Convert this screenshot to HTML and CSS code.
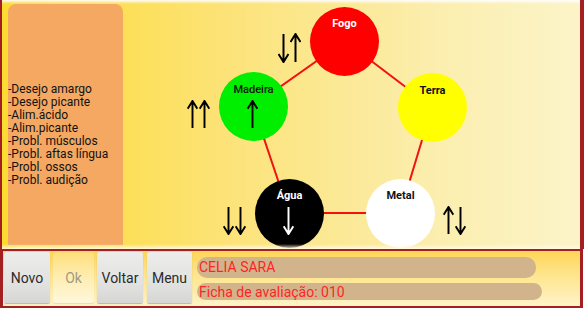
FILE: index.html
```html
<!DOCTYPE html>
<html lang="pt">
<head>
<meta charset="utf-8">
<link rel="stylesheet" href="styles.css">
</head>
<body>
<div class="screen">
  <div class="main">
    <div class="side">
      <div class="side-text">
        <div>-Desejo amargo</div>
        <div>-Desejo picante</div>
        <div>-Alim.ácido</div>
        <div>-Alim.picante</div>
        <div>-Probl. músculos</div>
        <div>-Probl. aftas língua</div>
        <div>-Probl. ossos</div>
        <div>-Probl. audição</div>
      </div>
    </div>
    <div class="diagram">
      <svg class="links" width="458" height="249" viewBox="0 0 458 249">
        <line x1="222" y1="41" x2="130" y2="106"/>
        <line x1="222" y1="41" x2="309" y2="107"/>
        <line x1="130" y1="106" x2="166" y2="213"/>
        <line x1="309" y1="107" x2="277" y2="213"/>
        <line x1="166" y1="213" x2="277" y2="213"/>
      </svg>

      <div class="node node-fogo">Fogo</div>
      <div class="node node-madeira">Madeira</div>
      <div class="node node-terra">Terra</div>
      <div class="node node-agua">Água</div>
      <div class="node node-metal">Metal</div>

      <div class="arrows arrows-fogo">
        <svg class="arrow down" viewBox="0 0 11 30" width="11" height="30"><path d="M5.5 1V29M0.5 21L5.5 29L10.5 21"/></svg>
        <svg class="arrow" viewBox="0 0 11 30" width="11" height="30"><path d="M5.5 29V1M0.5 9L5.5 1L10.5 9"/></svg>
      </div>
      <div class="arrows arrows-madeira-out">
        <svg class="arrow" viewBox="0 0 11 30" width="11" height="29"><path d="M5.5 29V1M0.5 9L5.5 1L10.5 9"/></svg>
        <svg class="arrow" viewBox="0 0 11 30" width="11" height="29"><path d="M5.5 29V1M0.5 9L5.5 1L10.5 9"/></svg>
      </div>
      <div class="arrows arrows-madeira-in">
        <svg class="arrow" viewBox="0 0 11 30" width="11" height="29"><path d="M5.5 29V1M0.5 9L5.5 1L10.5 9"/></svg>
      </div>
      <div class="arrows arrows-agua-in">
        <svg class="arrow white" viewBox="0 0 11 30" width="11" height="29"><path d="M5.5 1V29M0.5 21L5.5 29L10.5 21"/></svg>
      </div>
      <div class="arrows arrows-agua-out">
        <svg class="arrow" viewBox="0 0 11 30" width="11" height="29"><path d="M5.5 1V29M0.5 21L5.5 29L10.5 21"/></svg>
        <svg class="arrow" viewBox="0 0 11 30" width="11" height="29"><path d="M5.5 1V29M0.5 21L5.5 29L10.5 21"/></svg>
      </div>
      <div class="arrows arrows-metal">
        <svg class="arrow" viewBox="0 0 11 30" width="11" height="29"><path d="M5.5 29V1M0.5 9L5.5 1L10.5 9"/></svg>
        <svg class="arrow" viewBox="0 0 11 30" width="11" height="29"><path d="M5.5 1V29M0.5 21L5.5 29L10.5 21"/></svg>
      </div>
    </div>
  </div>

  <div class="bar">
    <div class="buttons">
      <div class="btn btn-novo">Novo</div>
      <div class="btn btn-ok disabled">Ok</div>
      <div class="btn btn-voltar">Voltar</div>
      <div class="btn btn-menu">Menu</div>
    </div>
    <div class="fields">
      <div class="field field-name">CELIA SARA</div>
      <div class="field field-ficha">Ficha de avaliação: 010</div>
    </div>
  </div>
</div>
</body>
</html>
```

FILE: styles.css
```css
html, body {
  margin: 0;
  padding: 0;
  background: #ffffff;
}

body {
  width: 584px;
  height: 310px;
  overflow: hidden;
  font-family: Roboto, "Liberation Sans", sans-serif;
}

.screen {
  display: flex;
  flex-direction: column;
  width: 584px;
  height: 310px;
}

/* ---------- main area ---------- */
.main {
  position: relative;
  display: flex;
  height: 249px;
  box-sizing: border-box;
  border-left: 2px solid #a41f22;
  border-right: 4px solid #a41f22;
  background: linear-gradient(to right, #fcdb32 0%, #fce37a 40%, #fbeeae 75%, #fcf4c9 100%);
  overflow: hidden;
}

.main::before {
  content: "";
  position: absolute;
  left: 0;
  right: 0;
  top: 0;
  height: 4px;
  background: linear-gradient(to bottom, rgba(255, 255, 255, 0.95), rgba(255, 255, 255, 0));
  z-index: 5;
}

.main::after {
  content: "";
  position: absolute;
  left: 0;
  right: 0;
  bottom: 0;
  height: 5px;
  background: linear-gradient(to bottom, rgba(255, 250, 220, 0), rgba(255, 250, 225, 0.95));
  z-index: 5;
}

.side {
  width: 115px;
  margin: 4px 0 4px 6px;
  background: #f4a862;
  border-radius: 8px 8px 0 0;
  box-sizing: border-box;
  padding-top: 79px;
}

.side-text {
  font-size: 12px;
  line-height: 13px;
  color: #111111;
  white-space: nowrap;
}

.diagram {
  position: relative;
  flex: 1;
}

.links {
  position: absolute;
  left: 0;
  top: 0;
}

.links line {
  stroke: #f21010;
  stroke-width: 2;
}

.node {
  position: absolute;
  width: 69px;
  height: 69px;
  border-radius: 50%;
  box-sizing: border-box;
  padding-top: 10px;
  text-align: center;
  font-size: 11px;
  line-height: 13px;
  font-weight: 700;
  color: #111111;
}

.node-fogo {
  left: 187px;
  top: 7px;
  background: #ff0000;
  color: #ffffff;
}

.node-madeira {
  left: 96px;
  top: 72px;
  padding-top: 11px;
  background: #00ee00;
  font-weight: 500;
}

.node-terra {
  left: 275px;
  top: 73px;
  padding-top: 11px;
  background: #ffff00;
}

.node-agua {
  left: 132px;
  top: 179px;
  background: #000000;
  color: #ffffff;
}

.node-metal {
  left: 243px;
  top: 179px;
  background: #ffffff;
}

.arrows {
  position: absolute;
  display: flex;
  gap: 1px;
}

.arrow path {
  fill: none;
  stroke: #000000;
  stroke-width: 2;
}

.arrow.white path {
  stroke: #ffffff;
}

.arrows-fogo {
  left: 155px;
  top: 33px;
}

.arrows-madeira-out {
  left: 64px;
  top: 100px;
}

.arrows-madeira-in {
  left: 124px;
  top: 100px;
}

.arrows-agua-in {
  left: 160px;
  top: 206px;
}

.arrows-agua-out {
  left: 100px;
  top: 206px;
}

.arrows-metal {
  left: 320px;
  top: 206px;
}

/* ---------- bottom bar ---------- */
.bar {
  display: flex;
  width: 583px;
  height: 59px;
  box-sizing: border-box;
  border: 2px solid #a41f22;
  border-left-width: 3px;
  border-right-width: 3px;
  background: linear-gradient(to bottom, #fed657 0%, #fee58e 45%, #fff3c8 100%);
}

.buttons {
  display: flex;
  gap: 3px;
  padding: 1px 0 0 1px;
}

.btn {
  height: 51px;
  box-sizing: border-box;
  display: flex;
  align-items: center;
  justify-content: center;
  font-size: 14px;
  color: #2b2b2b;
  border-radius: 2px;
  background: linear-gradient(to bottom, #ececea 0%, #e2e2e0 60%, #d6d6d4 100%);
  box-shadow: 0 1px 1px rgba(0, 0, 0, 0.25);
}

.btn-novo { width: 46px; }
.btn-ok { width: 41px; }
.btn-voltar { width: 46px; }
.btn-menu { width: 45px; margin-left: 1px; }

.btn.disabled {
  color: #a09a86;
  background: linear-gradient(to bottom, rgba(255, 255, 255, 0.2), rgba(255, 255, 255, 0.4));
  box-shadow: 0 1px 1px rgba(120, 100, 40, 0.15);
}

.fields {
  display: flex;
  flex-direction: column;
  gap: 5px;
  margin-left: 5px;
  padding-top: 6px;
}

.field {
  background: #d2b48c;
  color: #ff2424;
  font-size: 14px;
  box-sizing: border-box;
  padding-left: 2px;
  white-space: nowrap;
}

.field-name {
  width: 339px;
  height: 21px;
  line-height: 21px;
  border-radius: 10px;
}

.field-ficha {
  width: 345px;
  height: 17px;
  line-height: 18px;
  border-radius: 9px;
}
```
